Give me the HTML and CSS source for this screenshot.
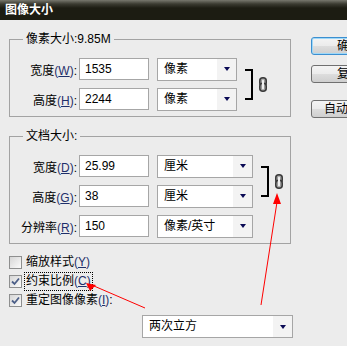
FILE: index.html
```html
<!DOCTYPE html>
<html lang="zh-CN">
<head>
    <meta charset="UTF-8">
    <title>图像大小</title>
    <link rel="stylesheet" href="styles.css">
</head>
<body>

<div class="titlebar">图像大小</div>

<div class="dialog">
    <div class="main">
        <fieldset class="group">
            <legend>像素大小:9.85M</legend>
            <div class="linked">
                <div class="rows">
                    <div class="row">
                        <label>宽度<span class="key">(<u>W</u>)</span>:</label>
                        <input class="field" type="text" value="1535">
                        <div class="select"><span class="val">像素</span><span class="arrow"></span></div>
                    </div>
                    <div class="row">
                        <label>高度<span class="key">(<u>H</u>)</span>:</label>
                        <input class="field" type="text" value="2244">
                        <div class="select"><span class="val">像素</span><span class="arrow"></span></div>
                    </div>
                </div>
                <div class="link">
                    <div class="bracket"></div>
                    <svg class="chain" width="8" height="15" viewBox="0 0 8 15">
                        <rect x="0.75" y="0.75" width="6.5" height="8" rx="3" fill="#9a9a9a" stroke="#3a3a3a" stroke-width="1.5"/>
                        <rect x="0.75" y="6.25" width="6.5" height="8" rx="3" fill="#9a9a9a" stroke="#3a3a3a" stroke-width="1.5"/>
                        <rect x="3" y="2.5" width="2" height="10" rx="1" fill="#f0f0f0"/>
                    </svg>
                </div>
            </div>
        </fieldset>

        <fieldset class="group doc">
            <legend>文档大小:</legend>
            <div class="linked">
                <div class="rows">
                    <div class="row">
                        <label>宽度<span class="key">(<u>D</u>)</span>:</label>
                        <input class="field" type="text" value="25.99">
                        <div class="select wide"><span class="val">厘米</span><span class="arrow"></span></div>
                    </div>
                    <div class="row">
                        <label>高度<span class="key">(<u>G</u>)</span>:</label>
                        <input class="field" type="text" value="38">
                        <div class="select wide"><span class="val">厘米</span><span class="arrow"></span></div>
                    </div>
                </div>
                <div class="link">
                    <div class="bracket"></div>
                    <svg class="chain" width="8" height="15" viewBox="0 0 8 15">
                        <rect x="0.75" y="0.75" width="6.5" height="8" rx="3" fill="#9a9a9a" stroke="#3a3a3a" stroke-width="1.5"/>
                        <rect x="0.75" y="6.25" width="6.5" height="8" rx="3" fill="#9a9a9a" stroke="#3a3a3a" stroke-width="1.5"/>
                        <rect x="3" y="2.5" width="2" height="10" rx="1" fill="#f0f0f0"/>
                    </svg>
                </div>
            </div>
            <div class="row">
                <label>分辨率<span class="key">(<u>R</u>)</span>:</label>
                <input class="field" type="text" value="150">
                <div class="select wide"><span class="val">像素/英寸</span><span class="arrow"></span></div>
            </div>
        </fieldset>

        <div class="options">
            <div class="option">
                <span class="checkbox"></span>
                <span class="text">缩放样式<span class="key">(<u>Y</u>)</span></span>
            </div>
            <div class="option">
                <span class="checkbox checked">
                    <svg width="11" height="11" viewBox="0 0 11 11"><path d="M2 5.5 L4.5 8 L9 2.5" fill="none" stroke="#4c5f88" stroke-width="1.8"/></svg>
                </span>
                <span class="text focus">约束比例<span class="key">(<u>C</u>)</span></span>
            </div>
            <div class="option">
                <span class="checkbox checked">
                    <svg width="11" height="11" viewBox="0 0 11 11"><path d="M2 5.5 L4.5 8 L9 2.5" fill="none" stroke="#4c5f88" stroke-width="1.8"/></svg>
                </span>
                <span class="text">重定图像像素<span class="key">(<u>I</u>)</span>:</span>
            </div>
        </div>

        <div class="select resample"><span class="val">两次立方</span><span class="arrow"></span></div>
    </div>

    <div class="buttons">
        <div class="button default">确定</div>
        <div class="button">复位</div>
        <div class="button auto">自动(A)...</div>
    </div>
</div>

<!-- red annotation arrows drawn over the dialog -->
<svg class="marks" width="347" height="346" viewBox="0 0 347 346">
    <line x1="261" y1="305" x2="277" y2="202" stroke="#ff0000" stroke-width="1"/>
    <polygon points="277,193 273,204 281,204" fill="#ff0000"/>
    <line x1="145" y1="308" x2="94" y2="286" stroke="#ff0000" stroke-width="1"/>
    <polygon points="86,283 96,285 90,291" fill="#ff0000"/>
</svg>

</body>
</html>
```

FILE: styles.css
```css
body {
    margin: 0;
    background-color: #ececec;
    font-family: "Liberation Sans", "Noto Sans CJK SC", sans-serif;
    font-size: 12px;
    color: #000;
    overflow: hidden;
}

.titlebar {
    height: 20px;
    line-height: 20px;
    padding-left: 5px;
    color: #fff;
    font-weight: bold;
    background: linear-gradient(#77776d 0, #3a3a30 4px, #1c1c12 8px, #1c1c12 100%);
}

.dialog {
    display: flex;
    align-items: flex-start;
    padding-left: 9px;
}

.main {
    width: 282px;
}

.group {
    margin: 11px 0 0 0;
    padding: 11px 0 6px 0;
    min-width: 0;
    border: 1px solid #a3a3a3;
}

.group.doc {
    padding-top: 11px;
}

.group legend {
    margin-left: 13px;
    padding: 0 3px;
    line-height: 16px;
}

.linked {
    display: flex;
    align-items: center;
}

.rows {
    display: flex;
    flex-direction: column;
    gap: 8px;
}

.doc .linked {
    margin-bottom: 8px;
}

.row {
    display: flex;
    align-items: center;
    height: 22px;
}

.row label {
    width: 67px;
    margin-right: 2px;
    text-align: right;
}

.key {
    color: #1f2f6a;
}

.field {
    box-sizing: border-box;
    width: 70px;
    height: 22px;
    margin: 0 8px 0 0;
    padding: 0 5px;
    border: 1px solid #a6a6a6;
    background: #fff;
    font-family: inherit;
    font-size: 12px;
    color: #000;
    outline: none;
}

.select {
    box-sizing: border-box;
    display: flex;
    width: 80px;
    height: 23px;
    border: 1px solid #a6a6a6;
    background: #fff;
}

.select.wide {
    width: 96px;
}

.select .val {
    flex: 1;
    padding-left: 6px;
    line-height: 21px;
}

.select .arrow {
    width: 19px;
    display: flex;
    align-items: center;
    justify-content: center;
    background: #f3f3f3;
}

.select .arrow::after {
    content: "";
    border-left: 3px solid transparent;
    border-right: 3px solid transparent;
    border-top: 4px solid #0a0a55;
}

.link {
    display: flex;
    align-items: center;
    margin-left: 8px;
}

.bracket {
    box-sizing: border-box;
    width: 8px;
    height: 31px;
    border: 2px solid #000;
    border-left: none;
}

.chain {
    margin-left: 6px;
}

.options {
    margin-top: 9px;
}

.option {
    display: flex;
    align-items: center;
    height: 19px;
}

.checkbox {
    box-sizing: border-box;
    display: flex;
    align-items: center;
    justify-content: center;
    width: 13px;
    height: 13px;
    border: 1px solid #8e8f8f;
    background: linear-gradient(135deg, #d6d6d6, #fbfbfb);
}

.option .text {
    margin-left: 2px;
    padding: 0 1px;
    line-height: 17px;
    border: 1px solid transparent;
}

.option .text.focus {
    border: 1px dotted #000;
}

.select.resample {
    width: 151px;
    margin: 5px 0 0 133px;
}

.buttons {
    display: flex;
    flex-direction: column;
    margin-left: 20px;
    padding-top: 17px;
}

.button {
    box-sizing: border-box;
    width: 76px;
    height: 18px;
    line-height: 16px;
    text-align: center;
    border: 1px solid #707070;
    border-radius: 3px;
    background: linear-gradient(#f4f4f4 0, #ebebeb 50%, #dddddd 51%, #cfcfcf 100%);
    margin-bottom: 10px;
}

.button.default {
    border-color: #3c8fd0;
    box-shadow: inset 0 0 0 1px #9fd8f8;
}

.button.auto {
    margin-top: 7px;
}

.marks {
    position: absolute;
    left: 0;
    top: 0;
    pointer-events: none;
}
```
